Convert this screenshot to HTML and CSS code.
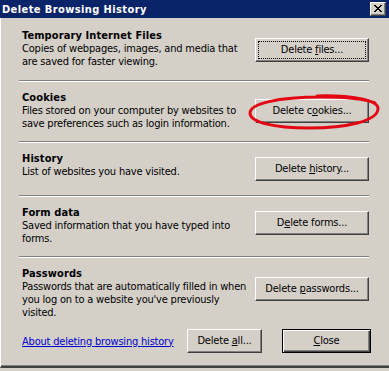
FILE: index.html
```html
<!DOCTYPE html>
<html>
<head>
<meta charset="utf-8">
<link rel="stylesheet" href="styles.css">
</head>
<body>
<div class="window">
  <div class="titlebar">
    <span class="title">Delete Browsing History</span>
    <span class="title-close">
      <svg width="8" height="7" viewBox="0 0 8 7" shape-rendering="crispEdges"><path fill="#000" d="M0 0h2v1H0zM6 0h2v1H6zM1 1h2v1H1zM5 1h2v1H5zM2 2h4v1H2zM3 3h2v1H3zM2 4h4v1H2zM1 5h2v1H1zM5 5h2v1H5zM0 6h2v1H0zM6 6h2v1H6z"/></svg>
    </span>
  </div>
  <div class="content">
    <section class="group g1">
      <div class="text">
        <h2>Temporary Internet Files</h2>
        <p>Copies of webpages, images, and media that<br>are saved for faster viewing.</p>
      </div>
      <button class="btn focused b1">Delete <u>f</u>iles...</button>
    </section>
    <section class="group g2">
      <div class="text">
        <h2>Cookies</h2>
        <p>Files stored on your computer by websites to<br>save preferences such as login information.</p>
      </div>
      <button class="btn b2">Delete c<u>o</u>okies...</button>
    </section>
    <section class="group g3">
      <div class="text">
        <h2>History</h2>
        <p>List of websites you have visited.</p>
      </div>
      <button class="btn b3">Delete <u>h</u>istory...</button>
    </section>
    <section class="group g4">
      <div class="text">
        <h2>Form data</h2>
        <p>Saved information that you have typed into<br>forms.</p>
      </div>
      <button class="btn b4">D<u>e</u>lete forms...</button>
    </section>
    <section class="group g5 last">
      <div class="text">
        <h2>Passwords</h2>
        <p>Passwords that are automatically filled in when<br>you log on to a website you've previously<br>visited.</p>
      </div>
      <button class="btn b5">Delete <u>p</u>asswords...</button>
    </section>
    <div class="footer">
      <a class="help-link" href="#">About deleting browsing history</a>
      <button class="btn btn-all">Delete <u>a</u>ll...</button>
      <button class="btn btn-close default"><u>C</u>lose</button>
    </div>
  </div>
  <svg class="annotation" width="136" height="40" viewBox="0 0 136 40">
    <path d="M70 3 C 104 2, 132 7, 131 16 C 130 28, 100 35, 62 35 C 26 35, 3 29, 3 20 C 3 11, 30 4, 74 4 C 96 4, 118 6, 128 10" fill="none" stroke="#e30613" stroke-width="3" stroke-linecap="round"/>
  </svg>
</div>
</body>
</html>
```

FILE: styles.css
```css
html, body {
  margin: 0;
  padding: 0;
}
body {
  width: 389px;
  height: 371px;
  overflow: hidden;
  background: #d4d0c8;
  font-family: "DejaVu Sans Condensed", "DejaVu Sans", sans-serif;
  font-stretch: condensed;
  font-size: 11px;
  line-height: 13px;
  letter-spacing: -0.2px;
  color: #000;
}
.window {
  position: relative;
  width: 389px;
  box-sizing: border-box;
  background: #d4d0c8;
  border-left: 1px solid #ffffff;
  border-bottom: 2px solid #404040;
  box-shadow: inset 0 -1px 0 #808080;
  height: 368px;
}
.titlebar {
  height: 18px;
  background: #0a246a;
  display: flex;
  align-items: center;
  justify-content: space-between;
  padding: 0 3px 0 2px;
  margin-left: -1px;
}
.title {
  color: #fff;
  font-weight: bold;
  letter-spacing: 0.4px;
}
.title-close {
  width: 16px;
  height: 14px;
  box-sizing: border-box;
  background: #d4d0c8;
  border: 1px solid;
  border-color: #fff #404040 #404040 #fff;
  box-shadow: inset -1px -1px 0 #808080;
  display: flex;
  align-items: center;
  justify-content: center;
  padding: 0 1px 1px 0;
}
.title-close svg {
  display: block;
}
.content {
  padding: 0 20px 0 18px;
}
.group {
  display: flex;
  justify-content: space-between;
  align-items: flex-start;
  padding: 9px 0 11px 3px;
  border-bottom: 1px solid #808080;
  box-shadow: 0 1px 0 #ffffff;
  margin-bottom: 1px;
}
.group.g1 {
  padding-top: 11px;
  padding-bottom: 12px;
}
.group.last {
  border-bottom: 0;
  box-shadow: none;
  padding-bottom: 0;
}
.text {
  min-height: 32px;
  white-space: nowrap;
}
h2 {
  margin: 0;
  font-size: 11px;
  font-weight: bold;
  line-height: 13px;
  letter-spacing: 0.1px;
}
p {
  margin: 0;
}
.btn {
  font: inherit;
  letter-spacing: inherit;
  color: #000;
  width: 114px;
  height: 24px;
  box-sizing: border-box;
  background: #d4d0c8;
  border: 1px solid;
  border-color: #ffffff #404040 #404040 #ffffff;
  box-shadow: inset -1px -1px 0 #808080;
  padding: 0 0 1px 0;
  margin: 0;
  flex: none;
}
.btn u {
  text-decoration-thickness: 1px;
  text-underline-offset: 1px;
}
.btn.focused {
  outline: 1px dotted #000;
  outline-offset: -4px;
}
.b1 { margin-top: 9px; }
.b2 { margin-top: 8px; }
.b3 { margin-top: 5px; }
.b4 { margin-top: 5px; }
.b5 { margin-top: 10px; }
.footer {
  display: flex;
  align-items: center;
  margin-top: 10px;
  padding-left: 3px;
  margin-right: -2px;
}
.help-link {
  color: #0000cc;
  text-decoration: underline;
  flex: 1;
}
.btn-all {
  width: 75px;
  margin-right: 20px;
}
.btn-close {
  width: 89px;
}
.btn.default {
  border: 1px solid #000;
  box-shadow: inset 1px 1px 0 #ffffff, inset -1px -1px 0 #404040, inset -2px -2px 0 #808080;
}
.annotation {
  position: absolute;
  left: 246px;
  top: 93px;
  overflow: visible;
}
```
